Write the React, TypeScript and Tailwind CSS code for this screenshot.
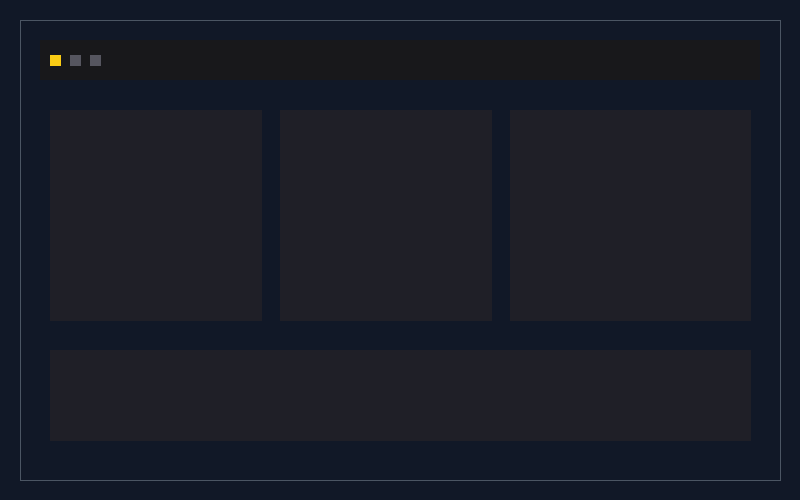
export default function App() {
  return (
    <div className="w-[800px] h-[500px] bg-[#111827] pt-5 pl-5">
      <div className="w-[761px] h-[461px] border border-[#4b5563] p-[19px]">
        <div className="h-10 w-[720px] bg-[#18181b] flex items-center gap-[9px] px-[10px]">
          <span className="w-[11px] h-[11px] bg-[#facc15]" />
          <span className="w-[11px] h-[11px] bg-[#55555f]" />
          <span className="w-[11px] h-[11px] bg-[#55555f]" />
        </div>
        <div className="px-[10px] pt-[30px] flex flex-col gap-[29px]">
          <div className="grid grid-cols-[212px_212px_241px] gap-[18px] h-[211px]">
            <div className="bg-[#1f1f27]" />
            <div className="bg-[#1f1f27]" />
            <div className="bg-[#1f1f27]" />
          </div>
          <div className="w-[701px] h-[91px] bg-[#1f1f27]" />
        </div>
      </div>
    </div>
  );
}
